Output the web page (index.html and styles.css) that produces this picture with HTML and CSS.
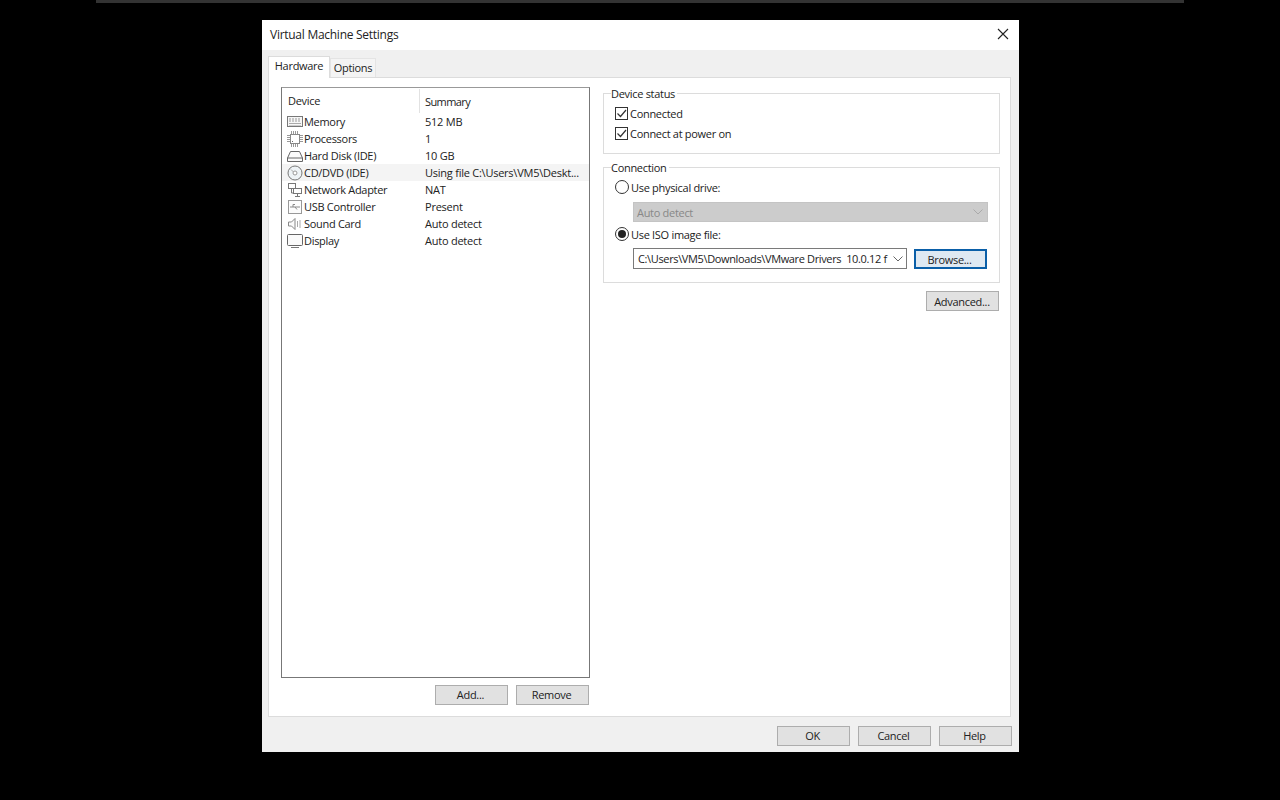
FILE: index.html
```html
<!DOCTYPE html>
<html lang="en">
<head>
<meta charset="utf-8">
<title>Virtual Machine Settings</title>
<link rel="stylesheet" href="styles.css">
</head>
<body>
<div class="topbar"></div>
<div class="window">
  <div class="titlebar">
    <span>Virtual Machine Settings</span>
    <svg class="close" width="12" height="12" viewBox="0 0 12 12"><path d="M1 1L11 11M11 1L1 11" stroke="#222" stroke-width="1.1" fill="none"/></svg>
  </div>
  <div class="tabs">
    <div class="tab active">Hardware</div>
    <div class="tab">Options</div>
  </div>
  <div class="panel">
    <div class="left">
      <div class="list">
        <div class="list-head"><div class="col-device">Device</div><div class="col-summary head-summary">Summary</div></div>
        <div class="row">
          <div class="col-device"><svg class="ico" viewBox="0 0 16 16"><rect x="0.500" y="2.500" width="15" height="10" fill="#f6f6f6" stroke="#777"/><path d="M2 5h12M2 7h12" stroke="#999" stroke-dasharray="2 1"/><path d="M2 9.500h12" stroke="#aaa"/><path d="M2 11.500h12" stroke="#ccc"/></svg>Memory</div>
          <div class="col-summary">512 MB</div>
        </div>
        <div class="row">
          <div class="col-device"><svg class="ico" viewBox="0 0 16 16"><rect x="3.500" y="3.500" width="9" height="9" fill="#fff" stroke="#888"/><path d="M4.500 0v3M6.500 0v3M8.500 0v3M10.500 0v3M4.500 13v3M6.500 13v3M8.500 13v3M10.500 13v3M0 4.500h3M0 6.500h3M0 8.500h3M0 10.500h3M13 4.500h3M13 6.500h3M13 8.500h3M13 10.500h3" stroke="#999"/><rect x="5" y="10" width="1" height="1" fill="#666"/></svg>Processors</div>
          <div class="col-summary">1</div>
        </div>
        <div class="row">
          <div class="col-device"><svg class="ico" viewBox="0 0 16 16"><path d="M3.500 3.500h9L15.500 10v3.500h-15V10zM0.500 10h15" fill="#fafafa" stroke="#666"/></svg>Hard Disk (IDE)</div>
          <div class="col-summary">10 GB</div>
        </div>
        <div class="row selected">
          <div class="col-device"><svg class="ico" viewBox="0 0 16 16"><circle cx="8" cy="8" r="7" fill="#eef3f6" stroke="#777"/><circle cx="8" cy="8" r="2" fill="#fff" stroke="#999"/><path d="M4 4.500L6.500 7" stroke="#aaa"/></svg>CD/DVD (IDE)</div>
          <div class="col-summary">Using file C:\Users\VM5\Deskt...</div>
        </div>
        <div class="row">
          <div class="col-device"><svg class="ico" viewBox="0 0 16 16"><rect x="1.500" y="1.500" width="7" height="5" fill="#fff" stroke="#777"/><rect x="6.500" y="6.500" width="8" height="5" fill="#fff" stroke="#777"/><path d="M4.500 7v4h2M10.500 12v2M8 14.500h5" stroke="#777" fill="none"/></svg>Network Adapter</div>
          <div class="col-summary">NAT</div>
        </div>
        <div class="row">
          <div class="col-device"><svg class="ico" viewBox="0 0 16 16"><rect x="1.500" y="1.500" width="13" height="13" fill="#fcfcfc" stroke="#999"/><path d="M3 8h10M6 8V5.500h2M8 8l2 2.500" stroke="#888" fill="none"/></svg>USB Controller</div>
          <div class="col-summary">Present</div>
        </div>
        <div class="row">
          <div class="col-device"><svg class="ico" viewBox="0 0 16 16"><path d="M1.500 6h3l3.500-3.500v11L4.500 10h-3z" fill="#fafafa" stroke="#888"/><path d="M10.500 5v6M13 4v8" stroke="#aaa"/></svg>Sound Card</div>
          <div class="col-summary">Auto detect</div>
        </div>
        <div class="row">
          <div class="col-device"><svg class="ico" viewBox="0 0 16 16"><rect x="0.500" y="1.500" width="15" height="11" rx="1" fill="#fafafa" stroke="#666"/><path d="M4 14.500h8" stroke="#777"/></svg>Display</div>
          <div class="col-summary">Auto detect</div>
        </div>
      </div>
      <div class="left-actions">
        <button class="btn">Add...</button>
        <button class="btn">Remove</button>
      </div>
    </div>
    <div class="right">
      <fieldset class="group status">
        <legend>Device status</legend>
        <label class="opt"><span class="check"><svg width="11" height="11" viewBox="0 0 11 11"><path d="M1.500 5.500L4.500 8.500L10 2" stroke="#333" stroke-width="1.200" fill="none"/></svg></span>Connected</label>
        <label class="opt"><span class="check"><svg width="11" height="11" viewBox="0 0 11 11"><path d="M1.500 5.500L4.500 8.500L10 2" stroke="#333" stroke-width="1.200" fill="none"/></svg></span>Connect at power on</label>
      </fieldset>
      <fieldset class="group connection">
        <legend>Connection</legend>
        <label class="opt"><span class="radio"></span>Use physical drive:</label>
        <div class="select disabled"><span>Auto detect</span><svg width="10" height="6" viewBox="0 0 10 6"><path d="M0.500 0.500L5 5L9.500 0.500" stroke="#aaa" fill="none"/></svg></div>
        <label class="opt iso"><span class="radio on"></span>Use ISO image file:</label>
        <div class="iso-row">
          <div class="select"><span class="path">C:\Users\VM5\Downloads\VMware Drivers&nbsp; 10.0.12 f</span><svg width="10" height="6" viewBox="0 0 10 6"><path d="M0.500 0.500L5 5L9.500 0.500" stroke="#666" fill="none"/></svg></div>
          <button class="btn focus">Browse...</button>
        </div>
      </fieldset>
      <div class="adv"><button class="btn">Advanced...</button></div>
    </div>
  </div>
  <div class="footer">
    <button class="btn">OK</button>
    <button class="btn">Cancel</button>
    <button class="btn">Help</button>
  </div>
</div>
</body>
</html>
```
FILE: styles.css
```css
* { box-sizing: border-box; }
html, body { margin: 0; height: 100%; }
body { background: #000; font-family: "Open Sans", "Noto Sans", sans-serif; font-size: 11px; letter-spacing: -0.3px; color: #222; overflow: hidden; }
.topbar { height: 3px; margin: 0 96px; background: #333; }
.window { width: 757px; height: 732px; margin: 17px 0 0 262px; background: #f0f0f0; display: flex; flex-direction: column; }
.titlebar { height: 30px; flex: none; background: #fff; display: flex; align-items: center; justify-content: space-between; padding: 0 10px 2px 8px; font-size: 12px; letter-spacing: -0.27px; }
.tabs { height: 27px; flex: none; display: flex; align-items: flex-end; padding-left: 6px; }
.tab { height: 19px; width: 46px; background: #f4f4f4; border: 1px solid #e4e4e4; border-bottom: 0; text-align: center; line-height: 18px; }
.tab.active { width: 62px; height: 22px; background: #fff; line-height: 18px; padding-bottom: 3px; border-color: #dcdcdc; position: relative; top: 1px; }
.panel { margin: 0 8px 0 6px; height: 640px; flex: none; background: #fff; border: 1px solid #dcdcdc; display: flex; padding: 9px 10px 0 12px; }
.left { width: 309px; flex: none; }
.list { height: 591px; border: 1px solid #777; border-top-color: #999; padding-top: 1px; }
.list-head { display: flex; height: 24px; align-items: center; }
.list-head .col-device { padding-left: 6px; height: 24px; line-height: 24px; border-right: 1px solid #e2e2e2; }
.row { display: flex; height: 17px; align-items: center; white-space: nowrap; }
.row.selected { background: #f4f4f4; }
.col-device { width: 138px; flex: none; display: flex; align-items: center; padding-left: 5px; }
.col-summary { padding-left: 5px; letter-spacing: -0.24px; }
.col-summary.head-summary { letter-spacing: -0.6px; }
.ico { width: 16px; height: 16px; flex: none; margin-right: 1px; }
.left-actions { display: flex; justify-content: flex-end; gap: 8px; padding: 7px 1px 0 0; }
.btn { width: 73px; height: 20px; padding: 0; background: #e1e1e1; border: 1px solid #adadad; font: inherit; letter-spacing: inherit; color: #222; }
.left-actions .btn, .footer .btn { padding: 0 2px 2px 0; }
.right { margin-left: 13px; width: 397px; flex: none; }
.group { margin: 0; padding: 0 0 0 11px; border: 1px solid #dcdcdc; min-width: 0; }
.group legend { padding: 0 2px 0 0; margin-left: -4px; line-height: 15px; height: 15px; }
.status { height: 68px; margin-top: -1px; }
.connection { height: 123px; margin-top: 6px; }
.opt { display: flex; align-items: center; height: 20px; }
.status .opt:first-of-type { margin-top: 2px; }
.check { width: 13px; height: 13px; border: 1px solid #333; margin-right: 2px; display: flex; align-items: center; justify-content: center; }
.radio { width: 14px; height: 14px; border: 1px solid #333; border-radius: 50%; margin-right: 2px; display: flex; align-items: center; justify-content: center; }
.radio.on::after { content: ""; width: 8px; height: 8px; border-radius: 50%; background: #222; }
.connection .opt:first-of-type { margin-top: 2px; }
.select { display: flex; align-items: center; justify-content: space-between; height: 20px; margin: 5px 0 0 18px; width: 355px; background: #ccc; border: 1px solid #c4c4c4; color: #888; padding: 0 4px 0 3px; white-space: nowrap; }
.opt.iso { margin-top: 2px; }
.iso-row { display: flex; align-items: flex-end; gap: 7px; margin-top: 4px; }
.iso-row .select { width: 274px; height: 21px; margin: 0 0 0 18px; background: #fff; border-color: #7a7a7a; color: #222; padding: 0 3px 0 4px; }
.path { width: 250px; letter-spacing: -0.36px; }
.btn.focus { background: #dfe9f2; border: 2px solid #0a5fa8; padding-right: 2px; }
.adv { display: flex; justify-content: flex-end; margin-top: 8px; padding-right: 1px; }
.adv .btn { padding-right: 1px; }
.footer { flex: 1; display: flex; justify-content: flex-end; gap: 8px; padding: 9px 7px 0 0; }
```
